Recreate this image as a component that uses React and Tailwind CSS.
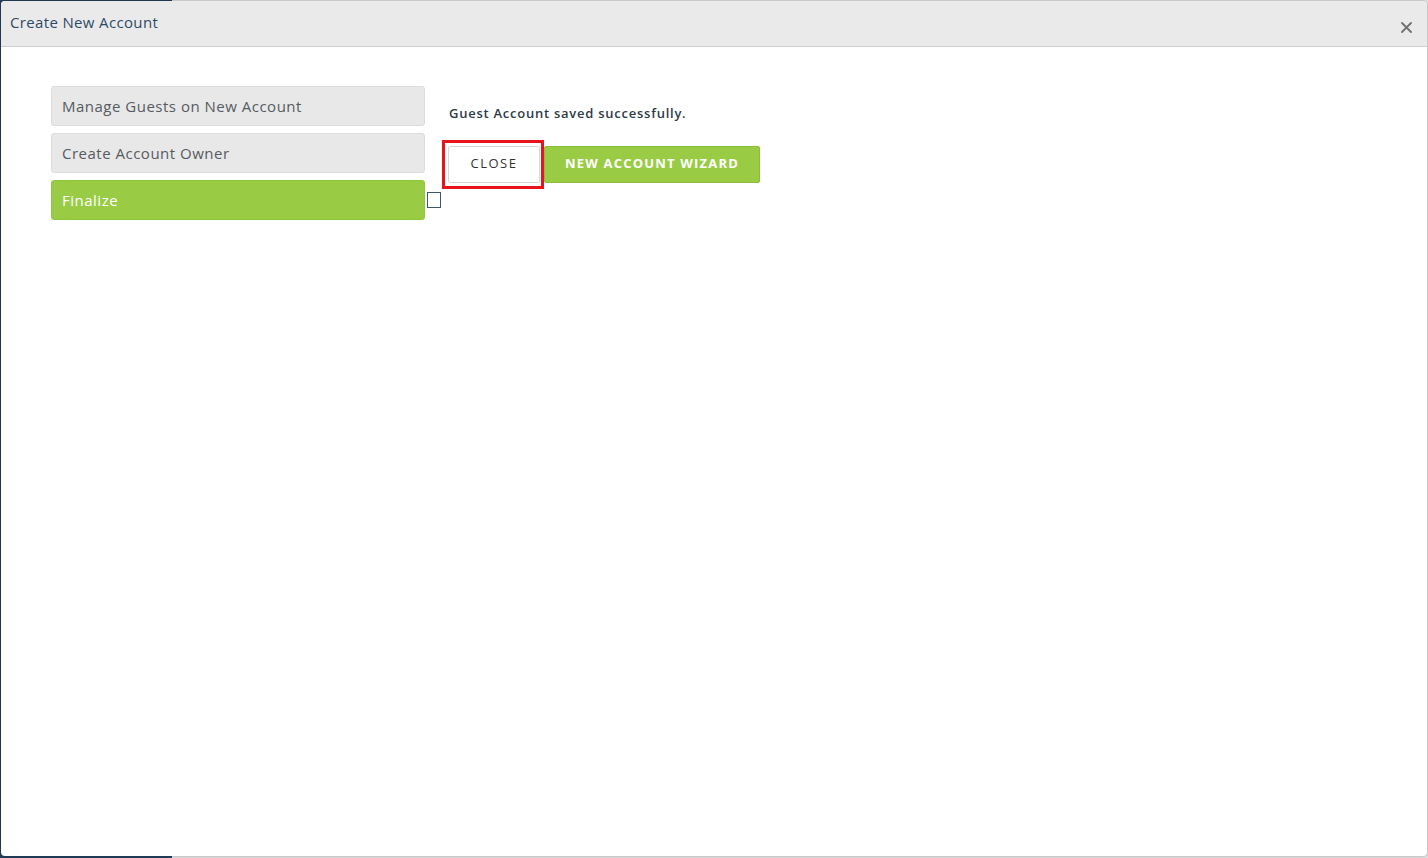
import React from 'react'

const font = { fontFamily: '"Open Sans", "Noto Sans", sans-serif' }

const NavItem = ({ label, active }) => (
    <div
        className={
            active
                ? 'h-[40px] flex items-center px-[10px] rounded-[3px] border border-[#8cc63f] bg-[#99cc44] text-white text-[15px] tracking-[0.5px]'
                : 'h-[40px] flex items-center px-[10px] rounded-[3px] border border-[#dcdcdc] bg-[#e9e8e8] text-[#555b62] text-[15px] tracking-[0.5px]'
        }
    >
        {label}
    </div>
)

export default function App() {
    return (
        <div className="relative w-[1428px] h-[858px] overflow-hidden flex" style={font}>
            {/* page behind the modal */}
            <div className="w-[172px] h-full bg-[#24405c]" />
            <div className="flex-1 h-full bg-[#e4e4e4]" />

            {/* modal */}
            <div className="absolute left-[1px] top-[1px] right-[1px] bottom-[2px] bg-white rounded-[4px] shadow-[0_0_3px_rgba(0,0,0,0.35)] flex flex-col overflow-hidden">
                <div className="h-[46px] shrink-0 flex items-center justify-between pl-[9px] pr-[15px] bg-[#ebeaea] border-b border-[#cfcfcf]">
                    <span className="text-[15px] text-[#2d4a66] tracking-[0.35px] -mt-[2px]">Create New Account</span>
                    <svg width="11" height="11" viewBox="0 0 11 11" className="mt-[8px]">
                        <path d="M1 1L10 10M10 1L1 10" stroke="#707070" strokeWidth="1.8" strokeLinecap="round" />
                    </svg>
                </div>

                <div className="flex pl-[50px] pt-[39px]">
                    {/* steps */}
                    <div className="w-[374px] flex flex-col gap-[7px]">
                        <NavItem label="Manage Guests on New Account" />
                        <NavItem label="Create Account Owner" />
                        <NavItem label="Finalize" active />
                    </div>

                    <div className="w-[14px] ml-[2px] pt-[106px]">
                        <div className="w-[14px] h-[16px] border border-[#3c5570] bg-white" />
                    </div>

                    {/* result */}
                    <div className="pl-[1px]">
                        <p className="mt-[18px] ml-[7px] text-[13px] font-semibold text-[#2e3b48] tracking-[0.75px]">
                            Guest Account saved successfully.
                        </p>
                        <div className="mt-[16px] flex items-center">
                            <div className="border-[3px] border-[#e8141c] p-[3px] pr-[1px]">
                                <button className="h-[37px] w-[92px] bg-white border border-[#d6d6d6] rounded-[2px] text-[13px] text-[#333] tracking-[1.5px]">
                                    CLOSE
                                </button>
                            </div>
                            <button className="h-[37px] w-[216px] bg-[#99cc44] border border-[#8bbd3a] rounded-[2px] text-[13px] font-bold text-white tracking-[1.2px]">
                                NEW ACCOUNT WIZARD
                            </button>
                        </div>
                    </div>
                </div>
            </div>
        </div>
    )
}
